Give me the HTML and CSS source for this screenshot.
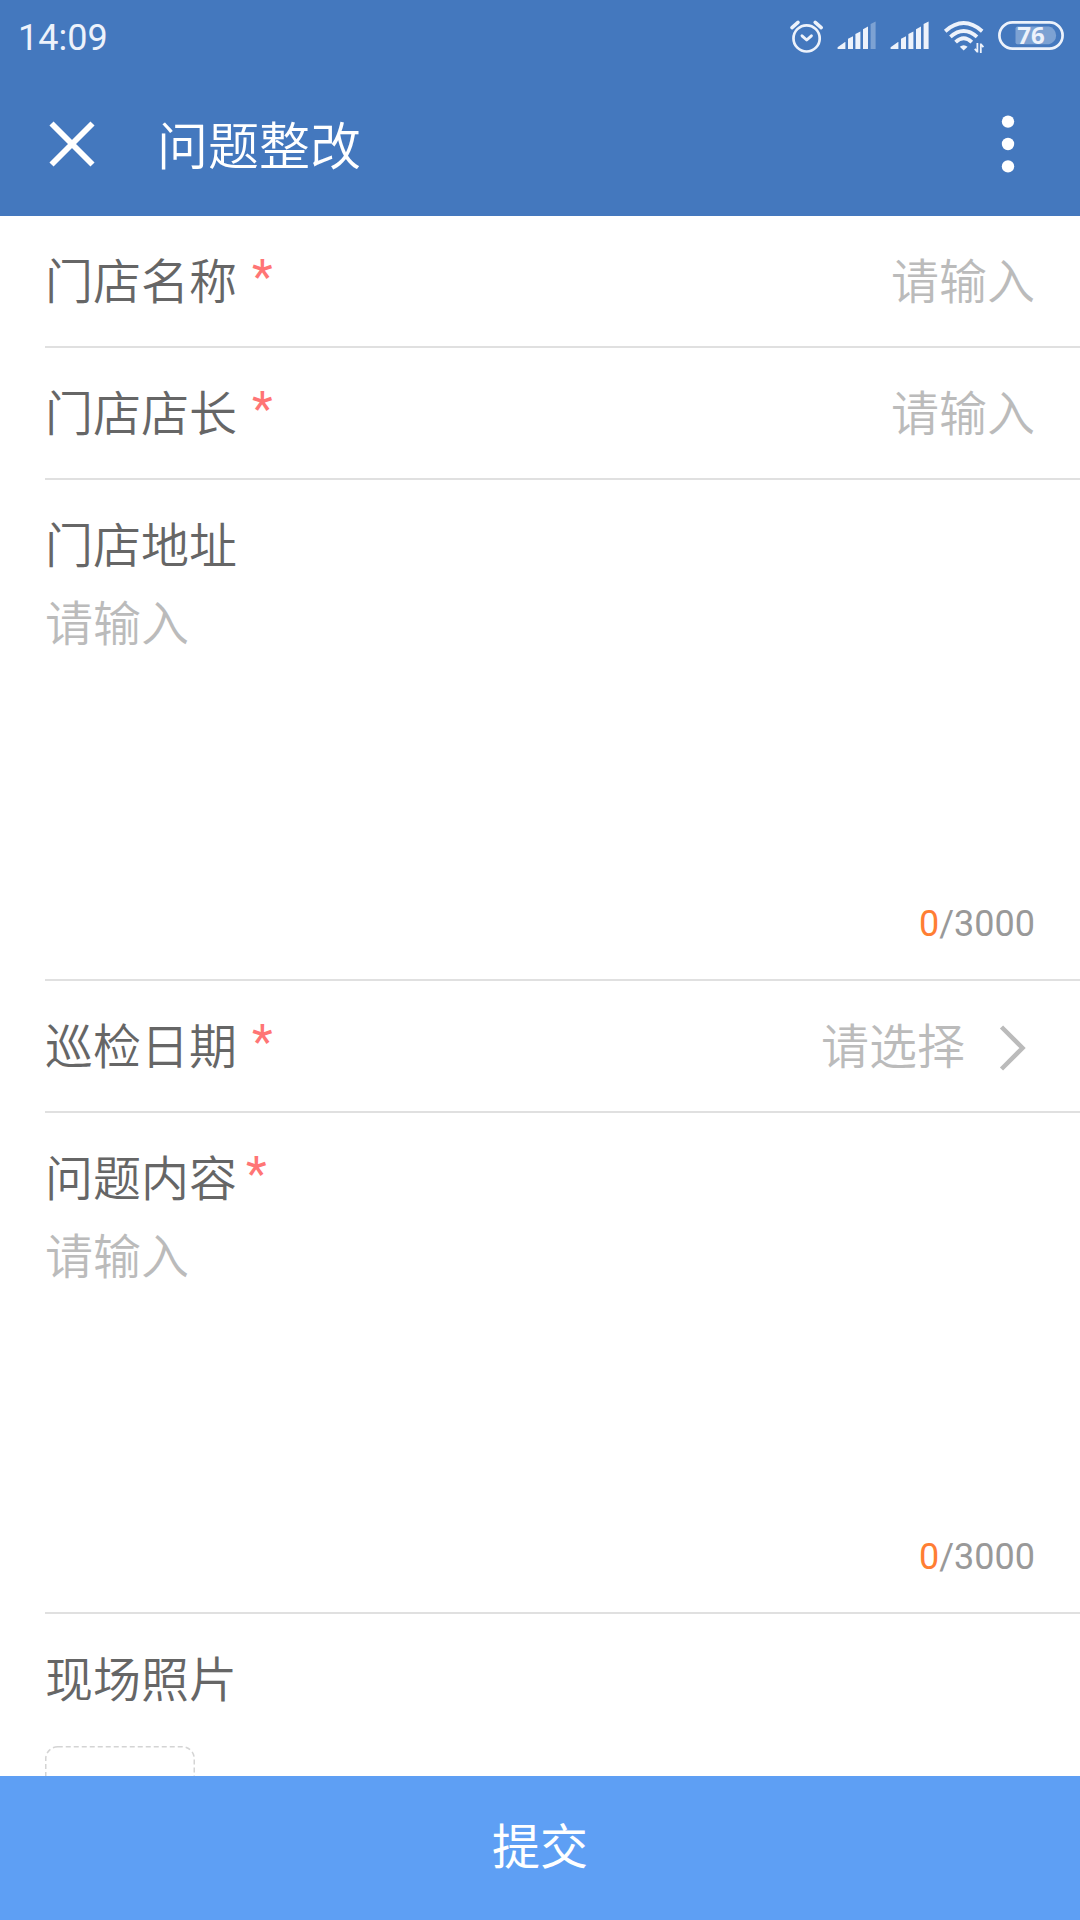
FILE: index.html
```html
<!DOCTYPE html>
<html lang="zh-CN">
<head>
<meta charset="utf-8">
<meta name="viewport" content="width=device-width">
<title>问题整改</title>
<link rel="stylesheet" href="styles.css">
</head>
<body>
<header class="header">
  <div class="status">
    <time class="clock">14:09</time>
    <div class="status-icons">
      <svg width="33" height="40" viewBox="0 0 33 40" fill="none" stroke="currentColor" stroke-linecap="round" stroke-linejoin="round"><circle cx="16.6" cy="22.4" r="13.1" stroke-width="2.7"/><path d="M12 19.8l4.7 4.2 4.7-4.2" stroke-width="2.9"/><path d="M2 11.6 8 6.4M31.2 11.6l-6-5.2" stroke-width="3.6"/></svg>
      <svg width="39" height="40" viewBox="0 0 39 40" fill="currentColor"><path d="M.6 33v-1.800L8 26h.4v7zM11 33V22.700l5-2.400V33zM18.400 33V18l5-2.600V33zM26 33V13.200l5-2.600V33z"/><path d="M33.600 33V8l5-2.600V33z" opacity=".34"/></svg>
      <svg width="40" height="40" viewBox="0 0 40 40" fill="currentColor"><path d="M.6 33v-1.800L8 26h.4v7zM11 33V22.700l5-2.400V33zM18.400 33V18l5-2.600V33zM26 33V13.200l5-2.600V33zM33.600 33V8l5-2.600V33z"/></svg>
      <svg width="40" height="40" viewBox="0 0 40 40" fill="none" stroke="currentColor" stroke-width="3.800"><path d="M1.200 15.200Q19.700-1 38.200 15.200M6.400 20.800Q19.700 9 33 20.800M11.600 26.200Q19.700 18.200 27.800 26.200"/><path d="M15.800 30.800Q19.700 27.600 23.600 30.800L19.700 34.400z" fill="currentColor" stroke="none"/><path d="M33.400 27v9.500M30.800 32.800l2.600 3M36.800 37v-9.500M39.400 31.200l-2.600-3" stroke-width="1.800"/></svg>
      <svg width="66" height="40" viewBox="0 0 66 40"><rect x="1.400" y="6.400" width="63.200" height="26.200" rx="13.100" fill="none" stroke="currentColor" stroke-width="2.700"/><path d="M19.500 10.600H51a9 9 0 0 1 0 17.600H19.500a2 2 0 0 1-2-2V12.600a2 2 0 0 1 2-2z" fill="currentColor" opacity=".34"/><text class="battery-level" x="33" y="28" text-anchor="middle" fill="currentColor">76</text></svg>
    </div>
  </div>
  <div class="appbar">
    <button class="icon-button" type="button" aria-label="关闭"><svg width="48" height="48" viewBox="0 0 48 48" fill="none" stroke="currentColor" stroke-width="5.800"><path d="M3.500 3.500l41 41M44.500 3.500l-41 41"/></svg></button>
    <h1 class="title">问题整改</h1>
    <button class="icon-button" type="button" aria-label="更多"><svg width="48" height="48" viewBox="0 0 48 48" fill="currentColor"><circle cx="24" cy="1.600" r="6.200"/><circle cx="24" cy="24" r="6.200"/><circle cx="24" cy="46.400" r="6.200"/></svg></button>
  </div>
</header>
<form class="form" id="rectify">
  <div class="field field-row">
    <label class="label" for="store">门店名称<span class="required spaced">*</span></label>
    <input class="input" id="store" type="text" placeholder="请输入">
  </div>
  <div class="field field-row">
    <label class="label" for="manager">门店店长<span class="required spaced">*</span></label>
    <input class="input" id="manager" type="text" placeholder="请输入">
  </div>
  <div class="field">
    <label class="label" for="address">门店地址</label>
    <textarea class="textarea" id="address" placeholder="请输入"></textarea>
    <p class="counter"><span class="count">0</span>/3000</p>
  </div>
  <div class="field field-row">
    <label class="label" for="date">巡检日期<span class="required spaced">*</span></label>
    <div class="picker">
      <select class="select" id="date"><option>请选择</option></select>
      <svg class="chevron" width="36" height="48" viewBox="0 0 36 48" fill="none" stroke="currentColor" stroke-width="4.500"><path d="M2.500 3 23.500 24 2.500 45"/></svg>
    </div>
  </div>
  <div class="field">
    <label class="label" for="content">问题内容<span class="required">*</span></label>
    <textarea class="textarea" id="content" placeholder="请输入"></textarea>
    <p class="counter"><span class="count">0</span>/3000</p>
  </div>
  <div class="field">
    <span class="label" id="photos">现场照片</span>
    <button class="photo" type="button" aria-labelledby="photos"><svg width="150" height="150" viewBox="0 0 150 150" fill="none" stroke="currentColor" stroke-width="1.500" stroke-dasharray="5 3"><rect x=".75" y=".75" width="148.500" height="148.500" rx="12"/></svg></button>
  </div>
</form>
<footer class="footer"><button class="submit" type="submit" form="rectify">提交</button></footer>
</body>
</html>
```
FILE: styles.css
```css
* { box-sizing: border-box; }

body {
  display: flex;
  flex-direction: column;
  height: 100vh;
  margin: 0;
  background: #fff;
  color: #666;
  font-family: Roboto, "Noto Sans CJK SC", sans-serif;
  font-size: 48px;
  line-height: 64px;
}

button, input, textarea, select {
  margin: 0;
  padding: 0;
  border: 0;
  border-radius: 0;
  outline: 0;
  background: none;
  color: inherit;
  font: inherit;
}

svg { display: block; overflow: visible; }

.header { flex: none; background: #4478be; color: #fff; }

.status {
  display: flex;
  align-items: center;
  justify-content: space-between;
  height: 72px;
  padding: 0 16px 0 18px;
  color: #edf2fb;
}

.clock { padding-top: 4px; font-size: 36px; line-height: 40px; }
.status-icons { display: flex; gap: 14px; }
.battery-level { font: 700 24px "Open Sans", sans-serif; }

.appbar {
  display: flex;
  align-items: center;
  height: 144px;
  padding: 0 48px;
}

.icon-button { flex: none; }

.title {
  flex: 1;
  margin: 0;
  padding: 8px 0 0 61px;
  font-size: 51px;
  font-weight: 350;
  line-height: 64px;
}

.form {
  flex: 1;
  min-height: 0;
  overflow-y: auto;
  scrollbar-width: none;
}

.field {
  margin-left: 45px;
  padding: 35px 45px 31px 0;
  border-bottom: 2px solid #e0e0e0;
}

.field-row { display: flex; justify-content: space-between; }

.label {
  display: block;
  flex: none;
  height: 64px;
}

.label, .input, .textarea, .select { font-weight: 350; }

.required {
  margin-left: 9px;
  color: #ff7575;
  font-weight: 400;
  line-height: 48px;
  vertical-align: 6px;
}

.required.spaced { margin-left: 15px; }

.input {
  flex: 1;
  min-width: 0;
  height: 64px;
  text-align: right;
}

.input::placeholder, .textarea::placeholder { color: #bbb; opacity: 1; }

.textarea {
  display: block;
  width: 100%;
  height: 309px;
  margin-top: 14px;
  resize: none;
}

.counter {
  margin: 0 0 2px;
  color: #999;
  font-size: 36px;
  line-height: 44px;
  text-align: right;
}

.count { color: #ff7e33; }

.picker {
  display: flex;
  align-items: center;
  gap: 33px;
  color: #bbb;
}

.select { height: 64px; appearance: none; }

.photo {
  display: block;
  margin-top: 33px;
  color: #d4d4d4;
}

.footer { flex: none; }

.submit {
  display: block;
  width: 100%;
  height: 144px;
  background: #5e9ff4;
  color: #fff;
}
```
